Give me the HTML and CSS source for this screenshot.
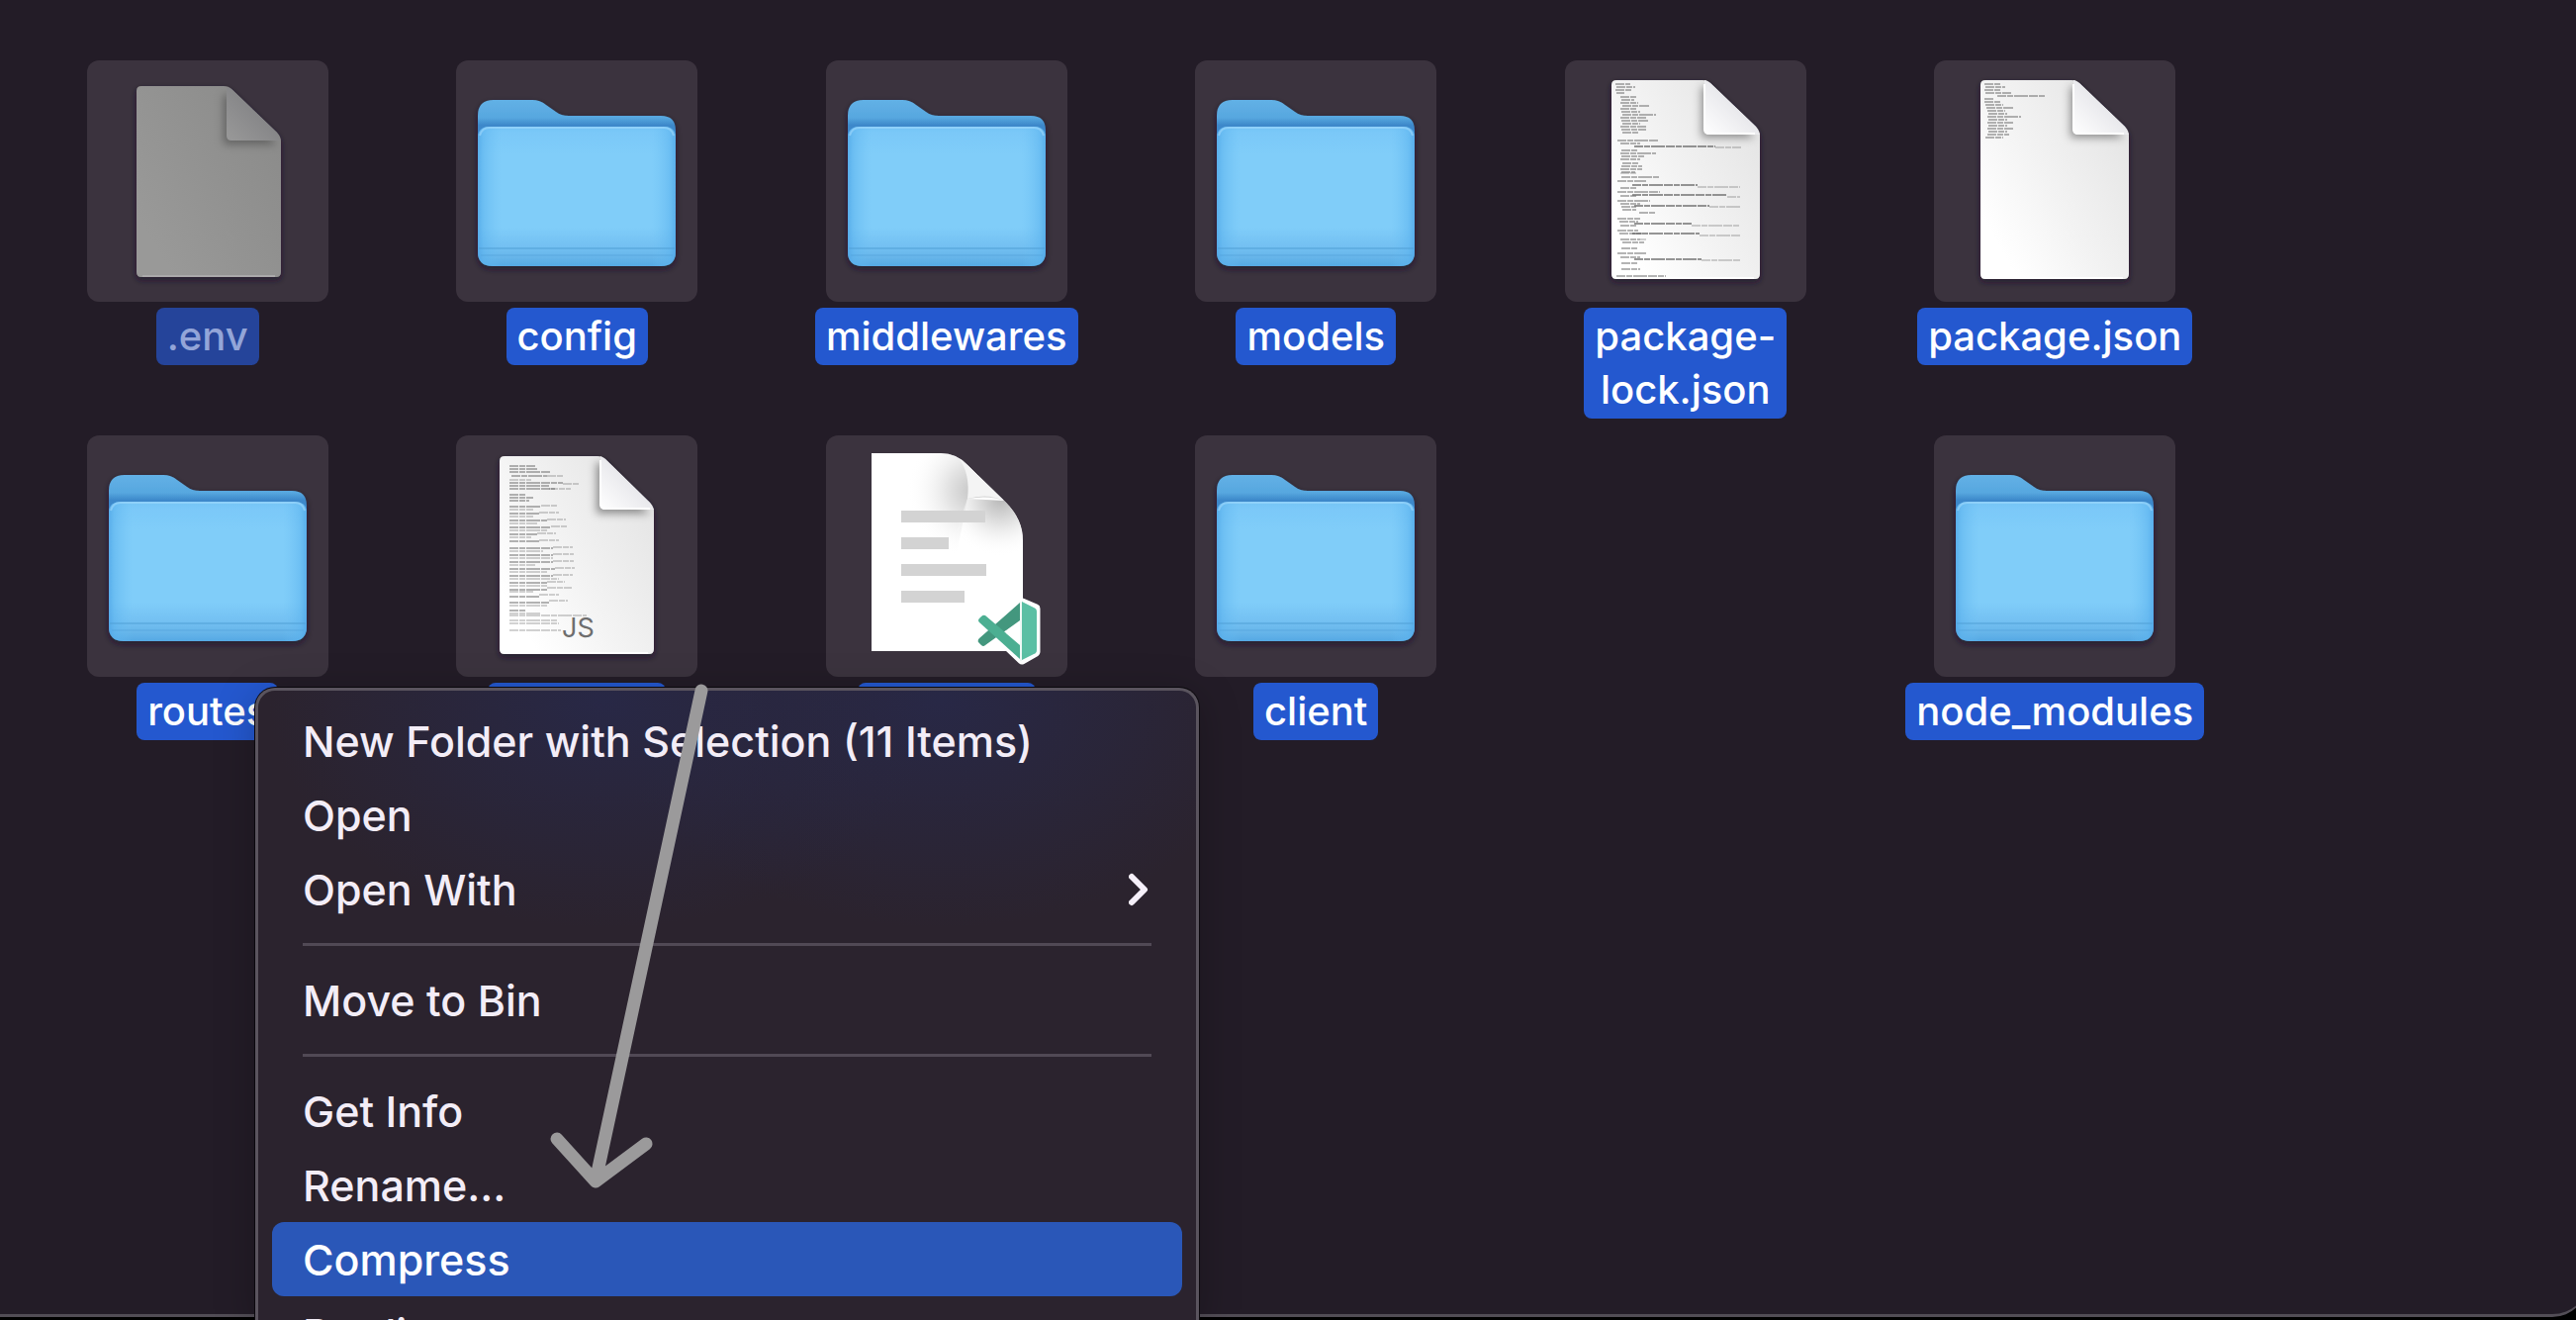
FILE: index.html
```html
<!DOCTYPE html>
<html lang="en">
<head>
<meta charset="utf-8">
<meta name="viewport" content="width=device-width, initial-scale=1">
<title>Project files</title>
<link rel="stylesheet" href="styles.css">
</head>
<body>

<svg class="defs" aria-hidden="true">
  <defs>
    <linearGradient id="folder-back" x1="0" y1="0" x2="0" y2="1">
      <stop offset="0" stop-color="#62b1e6"/>
      <stop offset=".12" stop-color="#57a7df"/>
      <stop offset=".17" stop-color="#3c88ca"/>
      <stop offset="1" stop-color="#3c88ca"/>
    </linearGradient>
    <linearGradient id="folder-front" x1="0" y1="0" x2="0" y2="1">
      <stop offset="0" stop-color="#74c4f5"/>
      <stop offset=".04" stop-color="#7ac8f8"/>
      <stop offset=".2" stop-color="#80cdf9"/>
      <stop offset=".72" stop-color="#80cdf9"/>
      <stop offset=".86" stop-color="#73c0f2"/>
      <stop offset=".93" stop-color="#68b6ea"/>
      <stop offset="1" stop-color="#55a9e4"/>
    </linearGradient>
    <linearGradient id="folder-sides" x1="0" y1="0" x2="1" y2="0">
      <stop offset="0" stop-color="#4ba3e6" stop-opacity=".75"/>
      <stop offset=".03" stop-color="#5cb3ee" stop-opacity=".55"/>
      <stop offset=".12" stop-color="#6cc0f4" stop-opacity="0"/>
      <stop offset=".88" stop-color="#6cc0f4" stop-opacity="0"/>
      <stop offset=".97" stop-color="#5cb3ee" stop-opacity=".55"/>
      <stop offset="1" stop-color="#4ba3e6" stop-opacity=".75"/>
    </linearGradient>
    <linearGradient id="paper" x1=".9" y1=".2" x2=".1" y2=".8">
      <stop offset="0" stop-color="#e6e6e6"/>
      <stop offset=".55" stop-color="#f3f3f3"/>
      <stop offset="1" stop-color="#ffffff"/>
    </linearGradient>
    <linearGradient id="fold" x1="1" y1="0" x2="0" y2="1">
      <stop offset=".4" stop-color="#e6e6ea"/>
      <stop offset="1" stop-color="#ffffff"/>
    </linearGradient>
    <linearGradient id="paper-dim" x1=".9" y1=".2" x2=".1" y2=".8">
      <stop offset="0" stop-color="#8c8c8b"/>
      <stop offset="1" stop-color="#999998"/>
    </linearGradient>
    <linearGradient id="fold-dim" x1="1" y1="0" x2="0" y2="1">
      <stop offset=".4" stop-color="#858587"/>
      <stop offset="1" stop-color="#999999"/>
    </linearGradient>
    <radialGradient id="curl-top" gradientUnits="userSpaceOnUse" cx="150" cy="56" r="68">
      <stop offset="0" stop-color="#c4c4c4"/>
      <stop offset=".4" stop-color="#e4e4e4"/>
      <stop offset="1" stop-color="#ffffff" stop-opacity="0"/>
    </radialGradient>
    <radialGradient id="curl-side" gradientUnits="userSpaceOnUse" cx="176" cy="64" r="58">
      <stop offset="0" stop-color="#b8b8b8"/>
      <stop offset=".5" stop-color="#e8e8e8"/>
      <stop offset="1" stop-color="#ffffff" stop-opacity="0"/>
    </radialGradient>
    <filter id="soft" x="-20%" y="-20%" width="140%" height="140%">
      <feGaussianBlur stdDeviation="4"/>
    </filter>
    <filter id="drop" x="-10%" y="-10%" width="120%" height="120%">
      <feDropShadow dx="0" dy="3" stdDeviation="3" flood-color="#1c1826" flood-opacity=".7"/>
    </filter>
    <symbol id="folder" viewBox="0 0 244 244">
      <g filter="url(#drop)">
        <path fill="url(#folder-back)" d="M22 56Q22 40 38 40H77Q85 40 91 45L101 52Q106 56 114 56H207Q222 56 222 71V190H22Z"/>
        <path fill="url(#folder-front)" d="M22 79Q22 67 34 67H210Q222 67 222 79V193Q222 208 207 208H37Q22 208 22 193Z"/>
        <path fill="url(#folder-sides)" d="M22 79Q22 67 34 67H210Q222 67 222 79V193Q222 208 207 208H37Q22 208 22 193Z"/>
      </g>
      <path stroke="#4f9fd6" stroke-opacity=".5" stroke-width="2" d="M23 190H221"/>
      <path stroke="#4f9fd6" stroke-opacity=".3" stroke-width="2" d="M25 197H219"/>
      <path fill="none" stroke="#a0d9fb" stroke-opacity=".6" stroke-width="2" d="M24 76Q26 68 34 68H210Q218 68 220 76"/>
    </symbol>
    <symbol id="page" viewBox="0 0 244 244">
      <path filter="url(#drop)" fill="url(#paper)" d="M52 20H139Q144 20 147 23L193 67Q197 71 197 76V216Q197 221 192 221H52Q47 221 47 216V25Q47 20 52 20Z"/>
      <path filter="url(#soft)" fill="#000" fill-opacity=".4" d="M138 26V78H192L180 66L146 28Z"/>
      <path fill="url(#fold)" d="M142 20L147 23L193 67L197 75H146Q141 75 141 70V20Z"/>
      <path stroke="#fff" stroke-width="2" fill="none" d="M53 220H191M141 24V70Q141 74 146 74H192"/>
    </symbol>
  </defs>
</svg>

<main class="window">
  <ul class="files">
    <li class="file file--dim">
      <svg class="file__icon" viewBox="0 0 244 244" aria-hidden="true">
        <path filter="url(#drop)" fill="url(#paper-dim)" d="M55 26H138Q143 26 146 29L192 73Q196 77 196 82V214Q196 219 191 219H55Q50 219 50 214V31Q50 26 55 26Z"/>
        <path filter="url(#soft)" fill="#000" fill-opacity=".3" d="M138 34V85H192L180 72L146 36Z"/>
        <path fill="url(#fold-dim)" d="M141 27L146 29L192 73L195 81H146Q141 81 141 76Z"/>
        <path stroke="#aaa9aa" stroke-width="2" fill="none" d="M56 218H190"/>
      </svg>
      <span class="file__name">.env</span>
    </li>
    <li class="file">
      <svg class="file__icon" aria-hidden="true"><use href="#folder"/></svg>
      <span class="file__name">config</span>
    </li>
    <li class="file">
      <svg class="file__icon" aria-hidden="true"><use href="#folder"/></svg>
      <span class="file__name">middlewares</span>
    </li>
    <li class="file">
      <svg class="file__icon" aria-hidden="true"><use href="#folder"/></svg>
      <span class="file__name">models</span>
    </li>
    <li class="file">
      <svg class="file__icon" viewBox="0 0 244 244" aria-hidden="true">
        <use href="#page"/>
        <path class="code" d="M51 24H66M52 27H71M51 30H68M52 33H60M56 37H72M57 40H70M56 43H74M58 46H85M56 49H72M57 52H76M58 55H92M56 58H82M57 61H84M58 64H76M56 67H82M57 70H82M58 73H75M53 81H95M56 84H76M57 91H74M56 94H92M57 97H80M56 100H76M58 104H74M57 107H78M56 110H78M57 113H71M57 118H95M53 122H82M56 129H72M53 133H96M56 137H72M53 142H86M56 145H76M57 148H72M58 151H72M75 154H91M53 160H76M55 163H74M56 167H72M53 172H74M55 175H78M56 181H76M58 184H80M57 190H74M53 195H82M56 199H76M57 205H74M57 211H76M52 218H102"/>
        <path class="code code--bold" d="M70 87H152M68 126H134M68 136H164M70 147H146M70 165H128M68 175H136M70 201H138"/>
        <path class="code code--faint" d="M152 88H178M134 128H177M164 138H177M146 148H177M128 167H177M136 177H177M138 202H177M56 114H72M76 181H82"/>
      </svg>
      <span class="file__name">package-lock.json</span>
    </li>
    <li class="file">
      <svg class="file__icon" viewBox="0 0 244 244" aria-hidden="true">
        <use href="#page"/>
        <path class="code" d="M51 24H68M52 27H72M51 30H68M52 33H78M64 36H113M51 39H60M51 42H68M52 45H70M53 48H80M54 51H72M55 54H74M54 57H88M55 60H74M54 63H80M55 66H74M54 69H80M55 72H74M54 75H76M52 78H70"/>
      </svg>
      <span class="file__name">package.json</span>
    </li>
    <li class="file">
      <svg class="file__icon" aria-hidden="true"><use href="#folder"/></svg>
      <span class="file__name">routes</span>
    </li>
    <li class="file">
      <svg class="file__icon" viewBox="0 0 244 244" aria-hidden="true">
        <path filter="url(#drop)" fill="url(#paper)" d="M49 21H143Q148 21 151 24L196 68Q200 72 200 77V216Q200 221 195 221H49Q44 221 44 216V26Q44 21 49 21Z"/>
        <path filter="url(#soft)" fill="#000" fill-opacity=".4" d="M142 27V79H196L184 67L150 29Z"/>
        <path fill="url(#fold)" d="M146 21L151 24L196 68L200 75H151Q146 75 146 70Z"/>
        <path stroke="#fff" stroke-width="2" fill="none" d="M50 220H194M146 25V70Q146 74 151 74H196"/>
        <path class="code" d="M54 31H80M54 34H82M54 37H95M56 41H92M54 48H108M54 51H94M54 54H100M54 60H70M54 63H78M54 66H74M54 72H86M54 79H84M54 86H92M54 93H96M54 100H82M54 107H84M54 114H98M54 121H98M54 128H98M54 135H100M54 142H98M54 149H92M54 156H92M54 163H84M54 169H94M54 177H70"/>
        <path class="code code--faint" d="M92 41H108M54 45H76M108 49H124M94 54H116M86 71H102M54 75H78M84 78H104M54 82H78M92 85H111M54 89H82M96 92H112M54 96H92M82 99H101M54 103H76M84 106H104M98 113H118M54 117H88M98 120H119M54 124H98M98 127H119M54 131H80M100 134H120M54 138H92M98 141H118M54 145H104M92 148H110M54 152H92M92 154H117M54 158H78M84 161H104M94 167H113M54 172H92M54 180H86M54 182H132M54 187H102M54 190H104M54 197H106"/>
        <text class="badge-text" x="107" y="204">JS</text>
      </svg>
      <span class="file__name file__name--covered"></span>
    </li>
    <li class="file">
      <svg class="file__icon" viewBox="0 0 244 244" aria-hidden="true">
        <path fill="#fff" d="M46 18H116Q132 18 143 30L180 66Q199 84 199 106V218H46Z"/>
        <path fill="url(#curl-top)" d="M46 18H116Q132 18 143 30L180 66Q164 60 143 64L130 130H46Z"/>
        <path fill="url(#curl-side)" d="M143 64L180 66Q199 84 199 106V130H120Z"/>
        <path fill="#f4f4f4" d="M134 23Q139 26 143 30L180 66Q164 58 143 64Q146 38 134 23Z"/>
        <path fill="#d3d3d3" d="M76 76H161V88H76ZM76 103H124V115H76ZM76 130H162V142H76ZM76 157H140V169H76Z"/>
        <path fill="#fff" stroke="#fff" stroke-width="9" stroke-linejoin="round" d="M198 169L212 175V219L198 227L176 206L160 212L154 206L168 194L155 187L160 182L173 190Z"/>
        <path fill="#43977e" d="M196 169V187L161 212Q159 214 157 212L154 209Q153 207 155 205Z"/>
        <path fill="#4caf92" d="M161 182L196 212V226L155 189Q153 187 155 185L157 183Q159 181 161 182Z"/>
        <path fill="#5bbfa4" d="M198 168L210 174Q213 175 213 178V217Q213 220 210 221L198 227Z"/>
        <path stroke="#dff2ec" stroke-width="1" d="M197 168V228"/>
      </svg>
      <span class="file__name file__name--covered"></span>
    </li>
    <li class="file">
      <svg class="file__icon" aria-hidden="true"><use href="#folder"/></svg>
      <span class="file__name">client</span>
    </li>
    <li class="file file--last-column">
      <svg class="file__icon" aria-hidden="true"><use href="#folder"/></svg>
      <span class="file__name">node_modules</span>
    </li>
  </ul>
</main>

<div class="menu" role="menu">
  <button class="menu__item" type="button" role="menuitem">New Folder with Selection (11 Items)</button>
  <button class="menu__item" type="button" role="menuitem">Open</button>
  <button class="menu__item" type="button" role="menuitem" aria-haspopup="menu">Open With
    <svg class="menu__chevron" viewBox="0 0 20 34" aria-hidden="true"><path d="M3 4L16 17L3 30"/></svg>
  </button>
  <hr class="menu__rule">
  <button class="menu__item" type="button" role="menuitem">Move to Bin</button>
  <hr class="menu__rule">
  <button class="menu__item" type="button" role="menuitem">Get Info</button>
  <button class="menu__item" type="button" role="menuitem">Rename...</button>
  <button class="menu__item menu__item--active" type="button" role="menuitem">Compress</button>
  <button class="menu__item" type="button" role="menuitem">Duplicate</button>
</div>

<svg class="arrow" viewBox="0 0 110 520" aria-hidden="true">
  <path d="M156 8L49 504M10 461L49 504L100 466"/>
</svg>

</body>
</html>
```
FILE: styles.css
```css
* {
  box-sizing: border-box;
}

body {
  margin: 0;
  height: 100vh;
  overflow: hidden;
  position: relative;
  background: #000;
  color: #fff;
  font-family: Inter, "Liberation Sans", sans-serif;
}

.defs {
  position: absolute;
  width: 0;
  height: 0;
}

.window {
  height: calc(100vh - 3px);
  margin-right: -12px;
  padding: 61px 352px 0 23px;
  background: #231c27;
  border-bottom: 3px solid #524d56;
  border-radius: 0 0 36px 0;
}

.files {
  display: grid;
  grid-template-columns: repeat(6, 1fr);
  row-gap: 17px;
  margin: 0;
  padding: 0;
  list-style: none;
}

.file {
  display: flex;
  flex-direction: column;
  align-items: center;
  gap: 6px;
}

.file--last-column {
  grid-column: 6;
}

.file__icon {
  width: 244px;
  height: 244px;
  border-radius: 12px;
  background: #3b333e;
}

.file__name {
  width: min-content;
  padding: 2px 11px;
  border-radius: 8px;
  background: #2458cf;
  font-size: 40px;
  font-weight: 500;
  line-height: 54px;
  text-align: center;
}

.file--dim .file__name {
  background: #25449a;
  color: #93a5d8;
}

.file__name--covered {
  width: 180px;
  height: 58px;
}

.code {
  fill: none;
  stroke: #6a6a6a;
  stroke-opacity: .5;
  stroke-width: 2;
  stroke-dasharray: 9 1 6 1 14 1;
}

.code--bold {
  stroke-opacity: .7;
}

.code--faint {
  stroke-opacity: .3;
}

.badge-text {
  fill: #6e6e6e;
  font: 400 27px Inter, "Liberation Sans", sans-serif;
}

.menu {
  position: absolute;
  top: 695px;
  bottom: 0;
  left: 258px;
  width: 954px;
  overflow: hidden;
  padding: 13px 14px 0;
  border: 3px solid #5a545e;
  border-bottom: 0;
  border-radius: 20px 20px 0 0;
  background:
    radial-gradient(ellipse 340px 230px at 350px 10px, #282846, rgba(40, 42, 60, 0)),
    radial-gradient(ellipse 340px 230px at 690px 10px, #282846, rgba(40, 42, 60, 0)),
    #2b232e;
  box-shadow: 0 0 0 1px #0b080d, 0 8px 40px rgba(0, 0, 0, .25);
}

.menu__item {
  display: flex;
  align-items: center;
  justify-content: space-between;
  width: 100%;
  height: 75px;
  margin: 0;
  padding: 0 34px 0 31px;
  border: 0;
  border-radius: 12px;
  background: none;
  color: #f3edf7;
  font: 500 43px/54px Inter, "Liberation Sans", sans-serif;
  text-align: left;
}

.menu__item--active {
  background: #2a57b8;
  color: #fff;
}

.menu__chevron {
  width: 20px;
  height: 34px;
  fill: none;
  stroke: #f6f0fa;
  stroke-width: 6;
  stroke-linecap: round;
  stroke-linejoin: round;
}

.menu__rule {
  height: 3px;
  margin: 17px 31px;
  border: 0;
  background: #514955;
}

.arrow {
  position: absolute;
  top: 690px;
  left: 553px;
  width: 110px;
  height: 520px;
  overflow: visible;
  fill: none;
  stroke: #9b9a9b;
  stroke-width: 13;
  stroke-linecap: round;
  stroke-linejoin: round;
  pointer-events: none;
}
```
